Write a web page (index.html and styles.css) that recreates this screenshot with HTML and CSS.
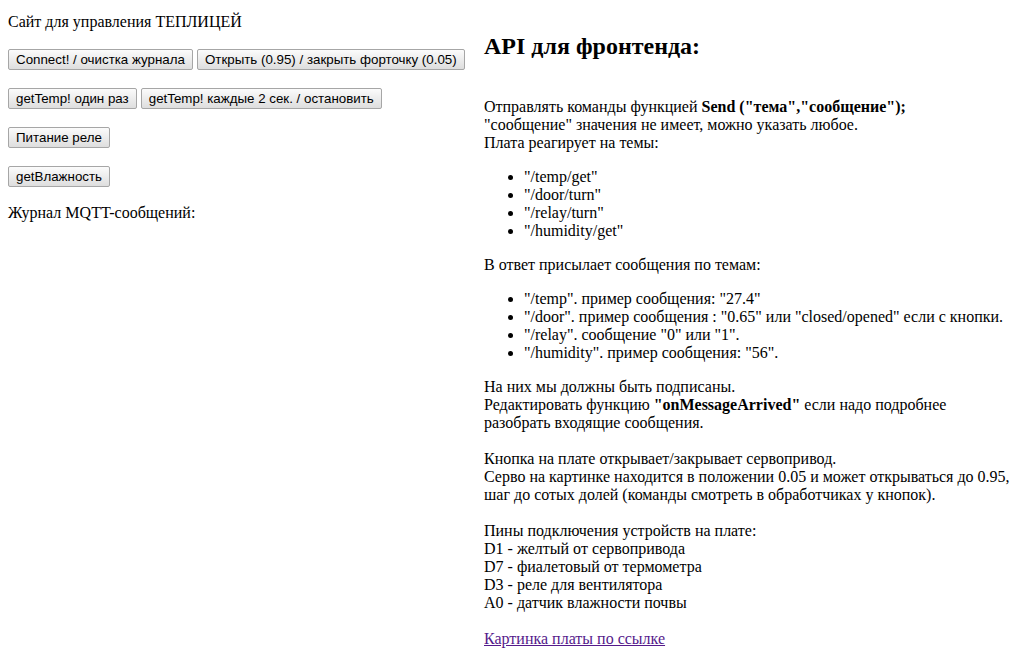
FILE: index.html
```html
<!DOCTYPE html>
<html lang="ru">
<head>
<meta charset="utf-8">
<title>Теплица</title>
<link rel="stylesheet" href="styles.css">
</head>
<body>
<div class="page">
  <div class="left">
    <div class="title">Сайт для управления ТЕПЛИЦЕЙ</div>
    <div class="btn-row first">
      <button class="btn">Connect! / очистка журнала</button>
      <button class="btn">Открыть (0.95) / закрыть форточку (0.05)</button>
    </div>
    <div class="btn-row">
      <button class="btn">getTemp! один раз</button>
      <button class="btn">getTemp! каждые 2 сек. / остановить</button>
    </div>
    <div class="btn-row">
      <button class="btn">Питание реле</button>
    </div>
    <div class="btn-row">
      <button class="btn">getВлажность</button>
    </div>
    <div class="log-title">Журнал MQTT-сообщений:</div>
  </div>
  <div class="right">
    <h2 class="api-title">API для фронтенда:</h2>
    <p class="block">Отправлять команды функцией <b>Send ("тема","сообщение");</b><br>"сообщение" значения не имеет, можно указать любое.<br>Плата реагирует на темы:</p>
    <ul class="list">
      <li>"/temp/get"</li>
      <li>"/door/turn"</li>
      <li>"/relay/turn"</li>
      <li>"/humidity/get"</li>
    </ul>
    <p class="block">В ответ присылает сообщения по темам:</p>
    <ul class="list">
      <li>"/temp". пример сообщения: "27.4"</li>
      <li>"/door". пример сообщения : "0.65" или "closed/opened" если с кнопки.</li>
      <li>"/relay". сообщение "0" или "1".</li>
      <li>"/humidity". пример сообщения: "56".</li>
    </ul>
    <p class="block gap">На них мы должны быть подписаны.<br>Редактировать функцию <b>"onMessageArrived"</b> если надо подробнее разобрать входящие сообщения.</p>
    <p class="block gap">Кнопка на плате открывает/закрывает сервопривод.<br>Серво на картинке находится в положении 0.05 и может открываться до 0.95, шаг до сотых долей (команды смотреть в обработчиках у кнопок).</p>
    <p class="block gap">Пины подключения устройств на плате:<br>D1 - желтый от сервопривода<br>D7 - фиалетовый от термометра<br>D3 - реле для вентилятора<br>A0 - датчик влажности почвы</p>
    <p class="block"><a class="link" href="#">Картинка платы по ссылке</a></p>
  </div>
</div>
</body>
</html>
```
FILE: styles.css
```css
html, body {
  margin: 0;
  padding: 0;
  background: #ffffff;
}
body {
  padding: 8px;
  font-family: "Liberation Serif", "Times New Roman", serif;
  font-size: 16px;
  line-height: 18px;
  color: #000;
}
.page {
  display: grid;
  grid-template-columns: 476px 1fr;
}
.left {
  display: flex;
  flex-direction: column;
  align-items: flex-start;
}
.title {
  margin-top: 5px;
}
.btn-row {
  display: flex;
  gap: 4px;
  margin-top: 18px;
}
.btn-row.first {
  margin-top: 18px;
}
.btn {
  font-family: "Liberation Sans", Arial, sans-serif;
  font-size: 13.333px;
  line-height: 15px;
  height: 21px;
  padding: 1px 7px;
  color: #000;
  border: 1px solid #a6a6a6;
  border-radius: 2px;
  background: linear-gradient(#fbfbfb, #dedede);
  margin: 0;
}
.log-title {
  margin-top: 17px;
}
.right {
  min-width: 0;
}
.api-title {
  font-size: 24px;
  line-height: 28px;
  font-weight: bold;
  margin: 24px 0 38px;
}
.block {
  margin: 0;
}
.block.gap {
  margin-bottom: 18px;
}
.list {
  margin: 16px 0;
  padding-left: 40px;
}
.link {
  color: #551a8b;
}
```
